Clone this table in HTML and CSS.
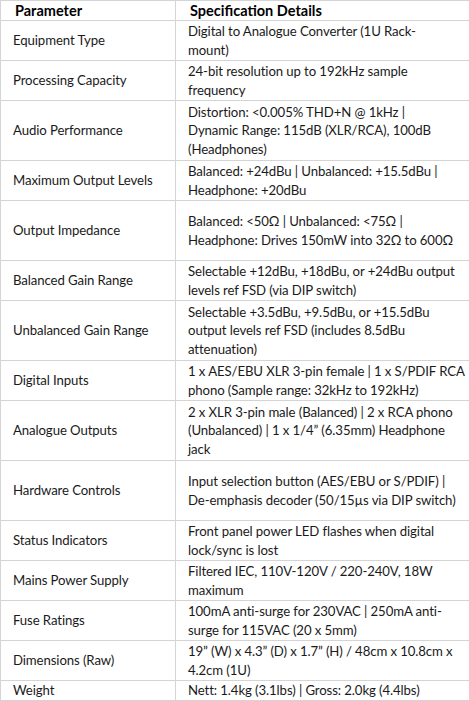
FILE: index.html
```html
<!DOCTYPE html>
<html>
<head>
<meta charset="utf-8">
<link rel="stylesheet" href="styles.css">
</head>
<body>
<table class="spec">
<colgroup><col class="c1"><col class="c2"></colgroup>
<thead>
<tr class="h1"><th>Parameter</th><th>Specification Details</th></tr>
</thead>
<tbody>
<tr class="h2"><td>Equipment Type</td><td>Digital to Analogue Converter (1U Rack-<br>mount)</td></tr>
<tr class="h2"><td>Processing Capacity</td><td>24-bit resolution up to 192kHz sample<br>frequency</td></tr>
<tr class="h3"><td>Audio Performance</td><td>Distortion: &lt;0.005% THD+N @ 1kHz |<br>Dynamic Range: 115dB (XLR/RCA), 100dB<br>(Headphones)</td></tr>
<tr class="h2"><td>Maximum Output Levels</td><td>Balanced: +24dBu | Unbalanced: +15.5dBu |<br>Headphone: +20dBu</td></tr>
<tr class="h3"><td>Output Impedance</td><td>Balanced: &lt;50Ω | Unbalanced: &lt;75Ω |<br>Headphone: Drives 150mW into 32Ω to 600Ω</td></tr>
<tr class="h2"><td>Balanced Gain Range</td><td>Selectable +12dBu, +18dBu, or +24dBu output<br>levels ref FSD (via DIP switch)</td></tr>
<tr class="h3"><td>Unbalanced Gain Range</td><td>Selectable +3.5dBu, +9.5dBu, or +15.5dBu<br>output levels ref FSD (includes 8.5dBu<br>attenuation)</td></tr>
<tr class="h2"><td>Digital Inputs</td><td>1 x AES/EBU XLR 3-pin female | 1 x S/PDIF RCA<br>phono (Sample range: 32kHz to 192kHz)</td></tr>
<tr class="h3"><td>Analogue Outputs</td><td>2 x XLR 3-pin male (Balanced) | 2 x RCA phono<br>(Unbalanced) | 1 x 1/4” (6.35mm) Headphone<br>jack</td></tr>
<tr class="h3"><td>Hardware Controls</td><td>Input selection button (AES/EBU or S/PDIF) |<br>De-emphasis decoder (50/15µs via DIP switch)</td></tr>
<tr class="h2"><td>Status Indicators</td><td>Front panel power LED flashes when digital<br>lock/sync is lost</td></tr>
<tr class="h2"><td>Mains Power Supply</td><td>Filtered IEC, 110V-120V / 220-240V, 18W<br>maximum</td></tr>
<tr class="h2"><td>Fuse Ratings</td><td>100mA anti-surge for 230VAC | 250mA anti-<br>surge for 115VAC (20 x 5mm)</td></tr>
<tr class="h2"><td>Dimensions (Raw)</td><td>19” (W) x 4.3” (D) x 1.7” (H) / 48cm x 10.8cm x<br>4.2cm (1U)</td></tr>
<tr class="h1"><td>Weight</td><td>Nett: 1.4kg (3.1lbs) | Gross: 2.0kg (4.4lbs)</td></tr>
</tbody>
</table>
</body>
</html>
```

FILE: styles.css
```css
html, body {
  margin: 0;
  padding: 0;
  background: #ffffff;
}

.spec {
  border-collapse: collapse;
  table-layout: fixed;
  width: 469px;
  font-family: "Lato", "Liberation Sans", sans-serif;
  font-size: 13.2px;
  letter-spacing: -0.1px;
  color: #1a1a1a;
}

.c1 { width: 175px; }
.c2 { width: 294px; }

.spec th,
.spec td {
  border: 1px solid #d4d4d4;
  padding: 0 0 0 12px;
  line-height: 18.5px;
  vertical-align: middle;
  text-align: left;
  white-space: nowrap;
}

.spec th {
  font-weight: 700;
  font-size: 14.5px;
  line-height: 18px;
  color: #000;
  padding-left: 14px;
  letter-spacing: 0;
}

.h1 { height: 20px; }
.h2 { height: 40px; }
.h3 { height: 60px; }
```
